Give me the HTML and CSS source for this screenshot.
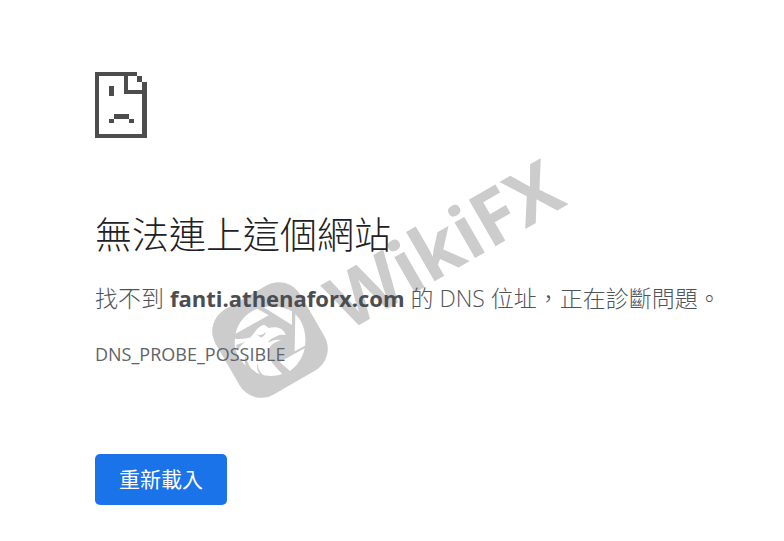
FILE: index.html
```
<!DOCTYPE html>
<html lang="zh-Hant">
<head>
  <meta charset="UTF-8">
  <meta name="viewport" content="width=device-width, initial-scale=1.0">
  <title>fanti.athenaforx.com</title>
  <link rel="stylesheet" href="styles.css">
</head>
<body>
  <main class="error-page">
    <svg class="sad-icon" viewBox="0 0 52 66" aria-hidden="true">
      <path fill="#4d4d4d" d="M0 0H42V4H33V18H47V10H52V66H0ZM4 4V62H47V22H29V4Z" fill-rule="evenodd"/>
      <path fill="#4d4d4d" d="M42 4h5v6h-5zM14 14h5v10h-5zM19 42h15v5H19zM14 47h5v4h-5zM34 47h5v4h-5z"/>
    </svg>
    <h1>無法連上這個網站</h1>
    <p class="summary">找不到 <strong>fanti.athenaforx.com</strong> 的 DNS 位址，正在診斷問題。</p>
    <p class="error-code">DNS_PROBE_POSSIBLE</p>
    <button type="button" class="reload">重新載入</button>

    <svg class="watermark" viewBox="0 0 380 260" aria-hidden="true">
      <!-- rounded tile -->
      <rect x="11" y="151" width="98" height="98" rx="25" fill="#ccc" transform="rotate(-30 60 200)"/>
      <g fill="#fff" transform="translate(-10 120) scale(.33333)">
        <!-- shutter blades -->
        <path d="M107 221C112 190 138 158 172 146L206 166Z"/>
        <path d="M191 142C220 134 252 140 276 154V195Z"/>
        <path d="M286 163C308 182 320 220 315 257L284 274Z"/>
        <path d="M314 265C309 292 292 318 270 333L239 306Z"/>
        <!-- eagle -->
        <path d="M105 236C120 238 138 237 152 232C166 214 176 198 190 195C199 195 201 203 208 204C226 199 252 203 257 226C247 223 238 225 231 228C219 234 208 238 204 248C216 241 232 237 244 240C222 246 206 258 205 276C206 300 220 314 247 342C228 349 205 349 190 345C178 336 172 322 174 308C168 322 172 334 181 343C164 337 148 324 145 310C140 302 138 294 140 285C132 296 133 305 138 317C118 300 104 274 104 248Z"/>
      </g>
      <path fill="#ccc" d="M46 194C49 196 53 195 56 192C55 196 52 198 49 197C51 196 48 196 46 194ZM26 205L35 202C31 205 28 209 28 212Z"/>
      <text transform="translate(137 192) rotate(-30)">WikiFX</text>
    </svg>
  </main>
</body>
</html>
```
FILE: styles.css
```
body {
  margin: 0;
  background: #fff;
  color: #5f6368;
  font-family: "Open Sans", "Noto Sans CJK TC", sans-serif;
}
.error-page {
  position: relative;
  padding: 72px 40px 36px 95px;
}
.sad-icon {
  display: block;
  width: 52px;
  height: 66px;
}
h1 {
  margin: 72px 0 0;
  color: #202124;
  font-size: 37px;
  font-weight: 300;
  line-height: 50px;
}
.summary {
  margin: 20px 0 0;
  color: #505459;
  font-size: 23px;
  font-weight: 300;
  line-height: 36px;
}
.summary strong {
  color: #4a4d52;
  font-size: 22px;
  font-weight: 700;
}
.error-code {
  margin: 24px 0 0;
  font-size: 18px;
  line-height: 28px;
}
.reload {
  display: block;
  margin-top: 86px;
  padding: 0 24px;
  border: 0;
  border-radius: 5px;
  background: #1a73e8;
  color: #fff;
  font: 400 21px/51px "Open Sans", "Noto Sans CJK TC", sans-serif;
  cursor: pointer;
}
/* sits behind the text */
.watermark {
  position: absolute;
  z-index: -1;
  top: 140px;
  left: 210px;
  width: 380px;
  height: 260px;
  overflow: visible;
}
.watermark text {
  fill: #ccc;
  font-family: "Open Sans", sans-serif;
  font-size: 75px;
  font-weight: 700;
}
```
